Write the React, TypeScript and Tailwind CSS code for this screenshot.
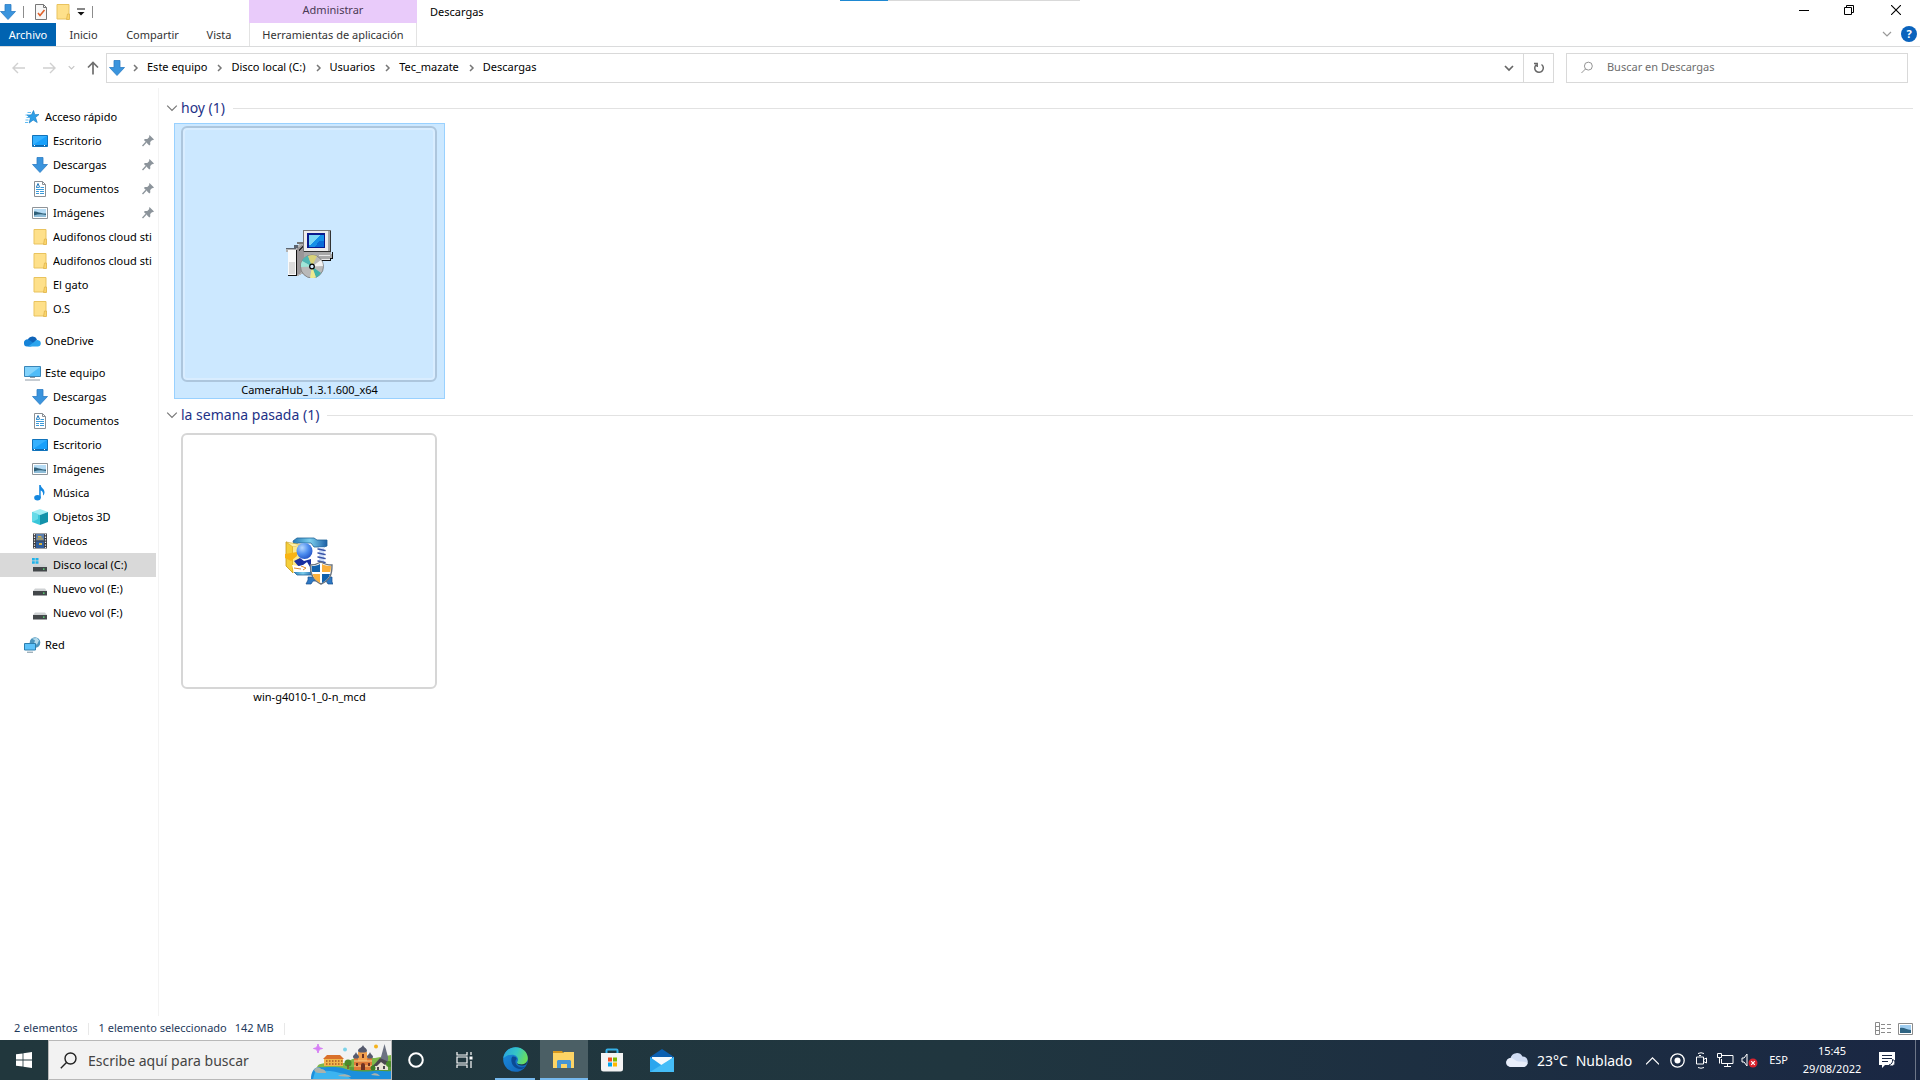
import { ReactNode } from 'react';

const Chevron = ({ d, size = 10, color = '#777', width = 1.2 }: { d: string; size?: number; color?: string; width?: number }) => (
  <svg width={size} height={size} viewBox="0 0 10 10" fill="none" stroke={color} strokeWidth={width}>
    <path d={d} />
  </svg>
);

const DOWN = 'M1 3l4 4 4-4';
const RIGHT = 'M3 2l3 3-3 3';

const ArrowDownIcon = () => (
  <svg width="16" height="16" viewBox="0 0 16 16">
    <path d="M5 .5h6v7h4.500L8 15.500.5 7.500H5z" fill="#3a94dd" stroke="#2b7cc4" strokeWidth=".8" />
  </svg>
);

const FolderIcon = () => (
  <svg width="16" height="16" viewBox="0 0 16 16">
    <path d="M2 .5h12V15H2z" fill="#fee08a" stroke="#e9c35e" />
    <path d="M12.500 10h2v5.500h-3z" fill="#fbd56b" stroke="#dfb44d" strokeWidth=".8" />
  </svg>
);

const DesktopIcon = () => (
  <svg width="16" height="16" viewBox="0 0 16 16">
    <path d="M.5 2.500h15v11H.5z" fill="#18a0fb" stroke="#1173bb" />
    <path d="M1 3h14L1 12z" fill="#35b1ff" />
    <path d="M1 12.500h14" stroke="#0f67ad" />
    <path d="M2 12.500h2M12 12.500h2" stroke="#fff" strokeDasharray="1 1" />
  </svg>
);

const DocumentIcon = () => (
  <svg width="16" height="16" viewBox="0 0 16 16" fill="none">
    <path d="M2.500.5h8l3 3v12h-11z" fill="#fff" stroke="#8a8f94" />
    <path d="M10.500.5v3h3" stroke="#8a8f94" />
    <path d="M4 8.500h8M4 10.500h3M8 10.500h4M4 12.500h3M8 12.500h4M8.500 6.500H12M4 6.500h3.500" stroke="#3b9ad9" />
    <path d="M4.500 6l1.500-3.500L7.500 6" stroke="#1f74b8" />
  </svg>
);

const PictureIcon = () => (
  <svg width="16" height="16" viewBox="0 0 16 16">
    <path d="M.5 2.500h15v11H.5z" fill="#fff" stroke="#8f9499" />
    <path d="M2 4h12v8H2z" fill="#b6dcf5" />
    <path d="M2 6.500c4 0 6 2 12 2V12H2z" fill="#2f5f78" />
    <path d="M2 10.500c4-1.500 8-1.500 12-.5v2H2z" fill="#8fbdd8" />
  </svg>
);

const StarIcon = () => (
  <svg width="16" height="16" viewBox="0 0 16 16">
    <path d="M9.500 1.500l1.300 4.200 4.200-.2-3.500 3 1.700 5-4-2.500-4 3 1.200-5L3 6.200l4.500-.4z" fill="#2d9fe8" stroke="#1b7fc5" strokeWidth=".7" />
    <path d="M3.500 3.500H7M1.500 6h3M2.500 8.500h2.500M1.500 11h3M1 13.500h3" stroke="#4db3f0" strokeWidth=".9" />
  </svg>
);

const OneDriveIcon = () => (
  <svg width="17" height="16" viewBox="0 0 17 16">
    <path d="M4 6a5 5 0 0 1 9 .5L8 12H4z" fill="#0f63b8" />
    <path d="M0 10.500a3.500 3.500 0 0 1 4.500-4L11 11l-4 2.500H3A3 3 0 0 1 0 10.500z" fill="#1583d8" />
    <path d="M4 13.500l6-4.500c2-2.500 4-2.500 5-1.500 1.500.5 1.800 2 1.800 3 0 2-1.300 3-3 3z" fill="#2ca5ee" />
  </svg>
);

const ComputerIcon = () => (
  <svg width="17" height="16" viewBox="0 0 17 16">
    <path d="M.5 1.500h16v10H.5z" fill="#4fbcf8" stroke="#3a86b8" />
    <path d="M1 2h15L4 11H1z" fill="#83d3fc" />
    <path d="M6 12.500h5M1 15h15" stroke="#8d9aa5" />
  </svg>
);

const MusicIcon = () => (
  <svg width="16" height="16" viewBox="0 0 16 16">
    <ellipse cx="5.500" cy="12.800" rx="3.300" ry="2.700" fill="#1488e0" />
    <path d="M7.200 0h1.500c.3 3 4 3.500 3.800 7.500-.1 1.500-.8 2.500-1.500 3 .5-3-.8-4.500-2.300-5V13H7.200z" fill="#1488e0" />
  </svg>
);

const CubeIcon = () => (
  <svg width="16" height="16" viewBox="0 0 16 16">
    <path d="M0 3l8-3 8 3-8 3z" fill="#a0eef5" />
    <path d="M0 3l8 3v10l-8-3z" fill="#38c6d9" />
    <path d="M16 3L8 6v10l8-3z" fill="#1392aa" />
    <path d="M0 3l6 2v5l-6 3z" fill="#66dbe8" />
  </svg>
);

const VideoIcon = () => (
  <svg width="16" height="16" viewBox="0 0 16 16">
    <path d="M1 .5h14v15H1z" fill="#3b3d42" />
    <path d="M4 1h8v6.500H4z" fill="#5b7fae" />
    <path d="M4 8.500h8V15H4z" fill="#2f5e9e" />
    <path d="M6 3h3l1 1.500H6zM5 5.500h6v1H5zM7 10h3v2H7z" fill="#d7b03c" />
    <path d="M2.500 1v14M13.500 1v14" stroke="#f0f0f0" strokeWidth="1.200" strokeDasharray="1.300 1.300" />
  </svg>
);

const DriveIcon = ({ system = false }: { system?: boolean }) => (
  <svg width="16" height="16" viewBox="0 0 16 16">
    <path d="M3 7.500h10l2 2.500H1z" fill="#cfd2d4" />
    <path d="M1 10h14v4.500H1z" fill="#43474a" />
    <path d="M11 12.200h1.500" stroke="#5cf07a" strokeWidth="1.300" />
    {system && <path d="M0 1h2.800v2.500H0zM3.500 1h3v2.500h-3zM0 4.200h2.800v2.500H0zM3.500 4.200h3v2.500h-3z" fill="#1fb3ea" />}
  </svg>
);

const NetworkIcon = () => (
  <svg width="17" height="16" viewBox="0 0 17 16">
    <circle cx="11" cy="5.500" r="5.300" fill="#4c95bd" />
    <path d="M8 1.500l3 2-1 3 3 1 2-4-2-2.500z" fill="#b5dbec" />
    <path d="M.5 6.500h11v6.500H.5z" fill="#5cc2fa" stroke="#2d7fae" />
    <path d="M3 15.200h6" stroke="#77909e" />
  </svg>
);

const PinIcon = () => (
  <svg width="12" height="12" viewBox="0 0 12 12" fill="#8c949b">
    <path d="M7.500 0L12 4.500l-1.200.7-.6-.2-2 2 .1 2.400-1 1L1.900 5l1-1 2.400.1 2-2-.2-.8z" />
    <path d="M4 7.200L.5 11" stroke="#8c949b" strokeWidth="1.300" />
  </svg>
);

type Item = { label: string; icon: ReactNode; pinned?: boolean; active?: boolean };
type Section = { label: string; icon: ReactNode; items: Item[] };

const sections: Section[] = [
  {
    label: 'Acceso rápido',
    icon: <StarIcon />,
    items: [
      { label: 'Escritorio', icon: <DesktopIcon />, pinned: true },
      { label: 'Descargas', icon: <ArrowDownIcon />, pinned: true },
      { label: 'Documentos', icon: <DocumentIcon />, pinned: true },
      { label: 'Imágenes', icon: <PictureIcon />, pinned: true },
      { label: 'Audifonos cloud sti', icon: <FolderIcon /> },
      { label: 'Audifonos cloud sti', icon: <FolderIcon /> },
      { label: 'El gato', icon: <FolderIcon /> },
      { label: 'O.S', icon: <FolderIcon /> },
    ],
  },
  { label: 'OneDrive', icon: <OneDriveIcon />, items: [] },
  {
    label: 'Este equipo',
    icon: <ComputerIcon />,
    items: [
      { label: 'Descargas', icon: <ArrowDownIcon /> },
      { label: 'Documentos', icon: <DocumentIcon /> },
      { label: 'Escritorio', icon: <DesktopIcon /> },
      { label: 'Imágenes', icon: <PictureIcon /> },
      { label: 'Música', icon: <MusicIcon /> },
      { label: 'Objetos 3D', icon: <CubeIcon /> },
      { label: 'Vídeos', icon: <VideoIcon /> },
      { label: 'Disco local (C:)', icon: <DriveIcon system />, active: true },
      { label: 'Nuevo vol (E:)', icon: <DriveIcon /> },
      { label: 'Nuevo vol (F:)', icon: <DriveIcon /> },
    ],
  },
  { label: 'Red', icon: <NetworkIcon />, items: [] },
];

const crumbs = ['Este equipo', 'Disco local (C:)', 'Usuarios', 'Tec_mazate', 'Descargas'];

const InstallerIcon = () => (
  <svg width="48" height="48" viewBox="0 0 48 48" shapeRendering="crispEdges">
    <path d="M1 18h11l3-5h5v30l-7 3H3V22H1z" fill="#b4b4b4" />
    <path d="M1 18h10v1H1zM9 15h4v3H9z" fill="#5c6470" />
    <path d="M12 12h7v2h-7z" fill="#777" />
    <path d="M3 20h8v25H3z" fill="#fafafa" />
    <path d="M4 32h6v12H4z" fill="#dcdcdc" />
    <path d="M11 20h1v26H3v-1h8z" fill="#111" />
    <path d="M12 18l7-4v27l-7 4z" fill="#9a9698" />
    <path d="M14 19l4-3v2l-4 3z" fill="#333" />
    <path d="M18 0h28v22H18z" fill="#777" />
    <path d="M19 1h24v20H19z" fill="#ededed" />
    <path d="M43 1h2v20h-2z" fill="#a5a5a5" />
    <path d="M45 1h1v21H19v-1h26z" fill="#333" />
    <path d="M22 3h18v15H22z" fill="#0a1a8c" />
    <path d="M24 5h15v12H24z" fill="#1590e8" />
    <path d="M24 5h11L26 15h-2z" fill="#7bd8f5" />
    <path d="M34 11h5v6h-9z" fill="#0a6cd8" />
    <path d="M19 22h27v2h2v5h-2v2H33l-14-4z" fill="#a8a8a8" />
    <path d="M34 25h11v1H34zM33 29h12v1H33z" fill="#e8e8e8" />
    <path d="M47 22h1v7h-2v2H36v-1h9v-2h2z" fill="#111" />
    <g shapeRendering="auto">
      <circle cx="27" cy="36.500" r="11.500" fill="#b9b9b9" stroke="#777" strokeWidth=".8" />
      <path d="M27 36.500L17 31q2-4 6-5.500z" fill="#4fb7b4" />
      <path d="M27 36.500L23 26q4-2 9 0z" fill="#d8d27a" />
      <path d="M27 36.500L36 30q2 3 2 6z" fill="#f1f1f1" />
      <path d="M27 36.500L36 43q-2 3-5 4.500z" fill="#3fb2a8" />
      <path d="M27 36.500L31 47.500q-3 1-6 .3z" fill="#ece98e" />
      <path d="M27 36.500L17 31q-1.500 3-1 6z" fill="#9fe6d8" />
      <circle cx="27" cy="36.500" r="2.300" fill="#d8ecff" stroke="#000" strokeWidth="1.200" />
    </g>
  </svg>
);

const WinZipIcon = () => (
  <svg width="48" height="48" viewBox="0 0 48 48">
    <defs>
      <linearGradient id="clamp" x1="0" x2="1" y1="0" y2="0">
        <stop offset="0" stopColor="#2378b5" />
        <stop offset=".5" stopColor="#7ed0ee" />
        <stop offset="1" stopColor="#1b5fa6" />
      </linearGradient>
      <radialGradient id="ball" cx=".35" cy=".3" r=".8">
        <stop offset="0" stopColor="#b5d8ff" />
        <stop offset=".5" stopColor="#4f8ff0" />
        <stop offset="1" stopColor="#1d4bc0" />
      </radialGradient>
    </defs>
    <path d="M8 4l4-3h17l3 2h10v6l-3 1h-6l-4 0-3-4H13L9 8z" fill="url(#clamp)" stroke="#1f6297" strokeWidth=".8" />
    <path d="M8 34h20v4H12z" fill="url(#clamp)" stroke="#1f6297" strokeWidth=".8" />
    <path d="M34 10h5v18h-5z" fill="#cfdff8" />
    <path d="M33 12l7 1.500M33 16l7 1.500M33 20l7 1.500M33 24l7 1.500" stroke="#3a55a8" strokeWidth="1.500" strokeLinecap="round" />
    <path d="M1 5l7 3v28l-7-7z" fill="#f5cf3b" stroke="#c79718" strokeWidth=".8" />
    <path d="M1 5l17 3-10 2z" fill="#fdf0a8" stroke="#d0a626" strokeWidth=".6" />
    <path d="M8 10l7-1v20l-7 7z" fill="#fbe98e" />
    <path d="M0 17l12-2v4l-6 5-6-3z" fill="#f8b414" />
    <path d="M9 24l6-3 4 3 7-2v9l-4 2-4-5-4 2z" fill="#1a2fa0" />
    <path d="M7 28l7 1 4-1 4-3 3 5v5H9z" fill="#fff" />
    <path d="M9 31l7 1M16 29l5 2-3 2" stroke="#e08b2e" fill="none" />
    <circle cx="19.500" cy="14" r="8" fill="url(#ball)" />
    <path d="M23 40h24v5l1 2h-5l-2-3H28l-2 3h-5l2-4z" fill="#2d78c4" stroke="#174e8c" strokeWidth=".7" />
    <path d="M36 25c3 2 6 3 11 3 0 10-2 15-11 19-8-4-10.500-9-10.500-19 4 0 7-1 10.500-3z" fill="#fff" stroke="#6b737c" strokeWidth="1.400" />
    <path d="M35 27v8h-7.800c-.4-2-.6-4-.6-6 3.400 0 6-.6 8.400-2zM37 37h8c-1 4-3.500 6.500-8 9z" fill="#1161ac" />
    <path d="M37 27c2.500 1.400 5.500 2 9 2 0 2-.2 4-.7 6H37zM35 37h-7.300c1 4 3 6.500 7.300 9z" fill="#fbb13c" />
  </svg>
);

const groups = [
  { title: 'hoy (1)', file: 'CameraHub_1.3.1.600_x64', icon: <InstallerIcon />, selected: true },
  { title: 'la semana pasada (1)', file: 'win-g4010-1_0-n_mcd', icon: <WinZipIcon />, selected: false },
];

function TitleBar() {
  return (
    <header className="relative">
      <div className="absolute left-[840px] top-0 flex h-px w-60 bg-[#d9d9d9]">
        <span className="w-12 bg-[#1e88d2]" />
      </div>
      <div className="flex h-[46px] items-start">
        <div className="w-[249px]">
          <div className="flex h-[23px] items-center">
            <ArrowDownIcon />
            <span className="ml-[7px] h-3 w-px bg-[#8c8c8c]" />
            <button aria-label="Propiedades" className="ml-[9px]">
              <svg width="16" height="16" viewBox="0 0 16 16" fill="none">
                <path d="M2.500.5h8l3 3v12h-11z" fill="#f7f7f7" stroke="#777" />
                <path d="M10.500.5v3h3" stroke="#777" />
                <path d="M5 9l2 2.500L11.500 6" stroke="#e0612a" strokeWidth="1.600" />
              </svg>
            </button>
            <button aria-label="Nueva carpeta" className="ml-1.5"><FolderIcon /></button>
            <button aria-label="Personalizar" className="ml-1.5">
              <svg width="8" height="8" viewBox="0 0 8 8"><path d="M0 .5h8v1H0zM.5 4h7L4 7.500z" fill="#111" /></svg>
            </button>
            <span className="ml-[7px] h-3 w-px bg-[#8c8c8c]" />
          </div>
          <nav className="flex h-[23px] items-center text-[#333]">
            <button className="h-full w-14 bg-[#0063b1] pt-px text-white">Archivo</button>
            <button className="w-[55px] pt-px">Inicio</button>
            <button className="w-[83px] pt-px">Compartir</button>
            <button className="w-[50px] pt-px">Vista</button>
          </nav>
        </div>
        <div className="h-full w-[168px]">
          <div className="flex h-[23px] items-center justify-center bg-[#e9cbfa] pb-[2px] text-[#4b3a55]">Administrar</div>
          <button className="h-[23px] w-full border-x border-[#e3e3e3] pt-px text-[#333]">Herramientas de aplicación</button>
        </div>
        <h1 className="ml-[13px] flex h-6 items-center">Descargas</h1>
        <div className="ml-auto">
          <div className="flex h-[20px] items-center">
            <button aria-label="Minimizar" className="flex w-[45px] justify-center">
              <svg width="10" height="10" viewBox="0 0 10 10" stroke="#000"><path d="M0 5.500h10" /></svg>
            </button>
            <button aria-label="Restaurar" className="flex w-[45px] justify-center">
              <svg width="10" height="10" viewBox="0 0 10 10" fill="none" stroke="#000"><path d="M.5 2.500h7v7h-7zM2.500 2.500v-2h7v7h-2" /></svg>
            </button>
            <button aria-label="Cerrar" className="flex w-[49px] justify-center">
              <svg width="10" height="10" viewBox="0 0 10 10" stroke="#000" strokeWidth="1.100"><path d="M0 0l10 10M10 0L0 10" /></svg>
            </button>
          </div>
          <div className="flex h-[26px] items-center justify-end gap-[9px] pr-[3px] pt-[2px]">
            <button aria-label="Expandir la cinta"><Chevron d={DOWN} color="#999" /></button>
            <button aria-label="Ayuda" className="size-4 rounded-full bg-[#0a63bd] text-[11px] leading-4 font-bold text-white">?</button>
          </div>
        </div>
      </div>
    </header>
  );
}

function AddressBar() {
  return (
    <div className="flex h-[42px] items-center border-t border-[#dadbdc] pr-3">
      <div className="flex w-[106px] items-center pl-3">
        <button aria-label="Atrás">
          <svg width="14" height="12" viewBox="0 0 14 12" fill="none" stroke="#d0d0d0" strokeWidth="1.400"><path d="M13 6H1.500M6 1L1 6l5 5" /></svg>
        </button>
        <button aria-label="Adelante" className="ml-4">
          <svg width="14" height="12" viewBox="0 0 14 12" fill="none" stroke="#d0d0d0" strokeWidth="1.400"><path d="M1 6h11.500M8 1l5 5-5 5" /></svg>
        </button>
        <button aria-label="Recientes" className="ml-3"><Chevron d={DOWN} size={7} color="#c4c4c4" width={1.6} /></button>
        <button aria-label="Subir" className="ml-3">
          <svg width="12" height="14" viewBox="0 0 12 14" fill="none" stroke="#6e6e6e" strokeWidth="1.700"><path d="M6 13.500V1.500M1 6.500l5-5 5 5" /></svg>
        </button>
      </div>
      <div className="flex h-[30px] flex-1 items-center border border-[#d9d9d9] pl-[2px]">
        <ArrowDownIcon />
        <div className="flex items-center gap-[2px]">
          {crumbs.map((crumb) => (
            <div key={crumb} className="flex items-center">
              <span className="flex w-[22px] justify-center"><Chevron d={RIGHT} width={1.5} /></span>
              <a href="#" className="whitespace-nowrap">{crumb}</a>
            </div>
          ))}
        </div>
        <button aria-label="Ubicaciones anteriores" className="mr-[9px] ml-auto"><Chevron d={DOWN} color="#666" width={1.7} /></button>
        <button aria-label="Actualizar" className="flex h-full w-[30px] items-center justify-center border-l border-[#d9d9d9]">
          <svg width="12" height="12" viewBox="0 0 12 12" fill="none" stroke="#666" strokeWidth="1.500"><path d="M8.500 2.500A4.300 4.300 0 1 1 3.200 2.800M1 1.500h3.200V5" /></svg>
        </button>
      </div>
      <label className="ml-3 flex h-[30px] w-[342px] items-center border border-[#d9d9d9] pl-[14px]">
        <svg width="13" height="13" viewBox="0 0 13 13" fill="none" stroke="#8a8a8a"><circle cx="8" cy="5" r="4.300" /><path d="M5 8L.5 12.500" /></svg>
        <input type="search" aria-label="Buscar en Descargas" placeholder="Buscar en Descargas" className="ml-[14px] w-full outline-none placeholder:text-[#6d6d6d]" />
      </label>
    </div>
  );
}

function Sidebar() {
  return (
    <nav className="flex w-[159px] shrink-0 flex-col gap-2 border-r border-[#f3f3f3] pt-[17px] pr-[2px]">
      {sections.map((section) => (
        <div key={section.label}>
          <a href="#" className="flex h-6 items-center gap-[5px] pl-6">
            <span className="w-4">{section.icon}</span>
            {section.label}
          </a>
          {section.items.map((item, i) => (
            <a key={i} href="#" className={`flex h-6 items-center pl-8 ${item.active ? 'bg-[#d9d9d9]' : ''}`}>
              {item.icon}
              <span className="ml-[5px] flex-1 overflow-hidden whitespace-nowrap">{item.label}</span>
              {item.pinned && <span className="pr-[2px]"><PinIcon /></span>}
            </a>
          ))}
        </div>
      ))}
    </nav>
  );
}

function FileList() {
  return (
    <main className="flex-1 px-[7px] pt-[7px]">
      {groups.map((group) => (
        <section key={group.title} className="mb-[3px]">
          <h2 className="flex h-7 items-center pb-[2px] text-sm text-[#1e3287]">
            <Chevron d={DOWN} size={12} width={1} />
            <span className="ml-[3px]">{group.title}</span>
            <span className="ml-2 h-px flex-1 bg-[#e2e2e2]" />
          </h2>
          <button className={`ml-2 block h-[276px] w-[271px] border px-[6px] pt-px ${group.selected ? 'border-[#99d1ff] bg-[#cce8ff]' : 'border-transparent'}`}>
            <span className={`flex h-64 w-64 items-center justify-center rounded-md border-2 ${group.selected ? 'border-[#adc6dd] shadow-[inset_0_0_0_2px_#d9edff]' : 'border-[#d6d6d6]'}`}>
              {group.icon}
            </span>
            <span className="block leading-4">{group.file}</span>
          </button>
        </section>
      ))}
    </main>
  );
}

function StatusBar() {
  return (
    <footer className="flex h-6 items-center pt-px pr-[7px] pl-[14px] text-[#1e395b]">
      <span>2 elementos</span>
      <span className="mx-[10px] h-3 w-px bg-[#e8e8e8]" />
      <span>1 elemento seleccionado</span>
      <span className="ml-2">142 MB</span>
      <span className="ml-[10px] h-3 w-px bg-[#e8e8e8]" />
      <button aria-label="Detalles" className="ml-auto">
        <svg width="17" height="13" viewBox="0 0 17 13" fill="none" stroke="#8a8a8a">
          <path d="M.5.5h4v12h-4zM.5 4.500h4M.5 8.500h4" />
          <path d="M6 2.500h11M6 6.500h11M6 10.500h11" strokeDasharray="4 2" />
        </svg>
      </button>
      <button aria-label="Miniaturas" className="ml-[6px]">
        <svg width="15" height="12" viewBox="0 0 15 12">
          <path d="M.5.5h14v11H.5z" fill="#fff" stroke="#8c8c8c" />
          <path d="M2 2h11v8H2z" fill="#9fcdf0" />
          <path d="M2 5c4-1 6 1.500 11 2v3H2z" fill="#2f6482" />
        </svg>
      </button>
    </footer>
  );
}

const Cityscape = () => (
  <svg width="80" height="38" viewBox="0 0 80 38">
    <path d="M6 26c2-4 5-3 8-4h22c3-4 8-5 12-5h16l16-3v20H6z" fill="#7fb84a" />
    <path d="M38 26c14 1 28-3 42-6v14H40z" fill="#5c9c3a" />
    <path d="M0 38c0-7 3-12 8-12 8 1 14-1 24 1 10 4 20 4 30 3 6-1 12 1 18 0v8z" fill="#1b8fdc" />
    <path d="M4 31c12-3 20 0 30 2l6 5H2z" fill="#3cb4f0" />
    <path d="M13 18l3-2h13l3 2v7H13z" fill="#f0b64c" />
    <path d="M12 18l4-4h13l4 4z" fill="#d9702a" />
    <path d="M15 20h17M15 23h17" stroke="#a85a24" strokeWidth="1.500" strokeDasharray="1.500 1.500" />
    <path d="M43 17h18v12H43z" fill="#e07a38" />
    <path d="M47 11h9v9h-9z" fill="#f2a14e" />
    <path d="M43 20h18M43 25h18" stroke="#f6cf8a" strokeWidth="1.200" />
    <path d="M50 29v-5a2 2 0 0 1 4 0v5zM45 22h2v3h-2zM57 22h2v3h-2zM51 13h2v4h-2z" fill="#6e3224" />
    <path d="M47 10c0-3 4-3 5-6 1 3 4 3 4 6 0 2-9 2-9 0zM42 16c0-2 2-2 3-5 1 3 3 3 3 5 0 2-6 2-6 0zM56 16c0-2 2-2 3-5 1 3 3 3 3 5 0 2-6 2-6 0z" fill="#565a6e" />
    <path d="M70 16l3.500-13L77 16v8h-7z" fill="#6c7282" />
    <path d="M64 24l5-6 8 3v8H64z" fill="#e9e3d6" />
    <path d="M62 25l7-8 9 4-4 3-4-3-4 4z" fill="#4c4750" />
    <path d="M66 26h2v3h-2zM72 25h2v3h-2z" fill="#4c4750" />
    <circle cx="37" cy="22" r="3.500" fill="#4b8a2c" /><path d="M37 24v4" stroke="#7a5428" strokeWidth="1.500" />
    <circle cx="62" cy="27" r="2.500" fill="#3d7d28" /><circle cx="78" cy="23" r="3" fill="#4b8a2c" />
    <path d="M3 29c2-4 6-3 7-1 3 0 5 2 5 4H8c-3 0-4-1-5-3zM27 35c2-2 11-3 13 1zM60 34c3-3 7-2 9 1z" fill="#a9b2ac" />
    <path d="M7 3c.6 3 1.500 4 4.500 4.500C8.500 8 7.600 9 7 12c-.6-3-1.500-4-4.500-4.500C5.500 7 6.400 6 7 3z" fill="#d67ef5" stroke="#d67ef5" />
    <circle cx="34" cy="8.500" r="2" fill="#7cd3ea" />
    <circle cx="65" cy="5.500" r="2" fill="#f5b21c" />
  </svg>
);

const apps = [
  {
    name: 'Microsoft Edge',
    style: 'ml-[7px] w-10 border-b-2 border-[#76b9ed] mr-[5px]',
    icon: (
      <svg width="25" height="25" viewBox="0 0 25 25">
        <defs>
          <linearGradient id="edgeTop" x1="0" x2="1" y1=".3" y2=".6">
            <stop offset="0" stopColor="#2aa5dd" />
            <stop offset=".5" stopColor="#35c6c6" />
            <stop offset="1" stopColor="#6ee053" />
          </linearGradient>
          <linearGradient id="edgeBottom" x1="0" x2="1" y1="0" y2="1">
            <stop offset="0" stopColor="#1b8fe0" />
            <stop offset="1" stopColor="#1160b4" />
          </linearGradient>
        </defs>
        <circle cx="12.500" cy="12.500" r="12.300" fill="url(#edgeBottom)" />
        <path d="M.4 11.500C1 4.800 6 .2 12.500.2c7 0 12.300 5 12.300 10.800 0 4-3 6.500-6.300 6.500-2.500 0-4.500-1-4.500-2 0-.7 1-1.200 1-3 0-2.500-2.500-4.800-6-4.800-4 0-7 1.800-8.600 3.800z" fill="url(#edgeTop)" />
        <path d="M9 10c-2 4 .5 11 7 12 3 .4 5-.7 6.800-2.500-3 1.500-9.300 1-10.300-4-.3-1.800.5-3 1.300-3.500C13 9.500 10 9 9 10z" fill="#0b4a94" />
        <path d="M14 15.500c0 1 2 2 4.500 2 2.300 0 4.300-1 5.500-3l-.6 2.500c-3 2.500-9.400 2-9.400-1.500z" fill="#21373d" />
      </svg>
    ),
  },
  {
    name: 'Explorador de archivos',
    style: 'w-12 border-b-2 border-[#76b9ed] bg-[#4b5f65]',
    icon: (
      <svg width="22" height="19" viewBox="0 0 22 19">
        <path d="M0 1h9l2 3H0z" fill="#d9981c" />
        <path d="M0 3h10l1-1h10v16H0z" fill="#fdd465" />
        <path d="M4 18v-7l1-1h12l1 1v7h-4v-4H8v4z" fill="#4795d4" />
      </svg>
    ),
  },
  {
    name: 'Microsoft Store',
    style: 'w-12',
    icon: (
      <svg width="24" height="24" viewBox="0 0 24 24">
        <path d="M6.500 6V2.500a1 1 0 0 1 1-1h9a1 1 0 0 1 1 1V6" fill="none" stroke="#36b1e8" strokeWidth="2" />
        <path d="M1 5h22v16a2.500 2.500 0 0 1-2.500 2.500h-17A2.500 2.500 0 0 1 1 21z" fill="#f4f4f4" />
        <path d="M8 9.500h4v4H8z" fill="#f25022" /><path d="M13 9.500h4v4h-4z" fill="#7fba00" />
        <path d="M8 14.500h4v4H8z" fill="#00a4ef" /><path d="M13 14.500h4v4h-4z" fill="#ffb900" />
      </svg>
    ),
  },
  {
    name: 'Correo',
    style: 'w-[52px]',
    icon: (
      <svg width="24" height="23" viewBox="0 0 24 23">
        <path d="M0 8l12-8 12 8v4H0z" fill="#0b5fb0" />
        <path d="M2 8h20v8H2z" fill="#f6fafd" />
        <path d="M0 8l12 8.500L24 8v15H0z" fill="#2aa6ee" />
        <path d="M24 8v15H0z" fill="#45bdf7" />
      </svg>
    ),
  },
];

function Taskbar() {
  return (
    <footer className="flex h-10 items-center bg-linear-to-r from-[#21373d] via-[#20363f] to-[#1a2743] text-white">
      <button aria-label="Inicio" className="flex w-12 justify-center">
        <svg width="16" height="16" viewBox="0 0 16 16" fill="#fff"><path d="M0 2.300L6.600 1.400v6.200H0zM7.400 1.300L16 0v7.600H7.400zM0 8.400h6.600v6.200L0 13.700zM7.400 8.400H16V16l-8.600-1.300z" /></svg>
      </button>
      <label className="flex h-10 w-[344px] items-center border border-[#b8b8b8] bg-[#f2f2f2] pl-[11px]">
        <svg width="17" height="17" viewBox="0 0 17 17" fill="none" stroke="#222" strokeWidth="1.400"><circle cx="10.500" cy="6.500" r="5.500" /><path d="M6.500 10.500L.8 16.200" /></svg>
        <input type="search" aria-label="Escribe aquí para buscar" placeholder="Escribe aquí para buscar" className="ml-[11px] min-w-0 flex-1 pt-[2px] text-sm outline-none placeholder:text-[#444]" />
        <Cityscape />
      </label>
      <button aria-label="Cortana" className="flex w-12 justify-center">
        <svg width="16" height="16" viewBox="0 0 16 16" fill="none" stroke="#fff" strokeWidth="2"><circle cx="8" cy="8" r="6.800" /></svg>
      </button>
      <button aria-label="Vista de tareas" className="flex w-12 justify-center">
        <svg width="17" height="16" viewBox="0 0 17 16" fill="none" stroke="#fff" strokeWidth="1.200">
          <path d="M1 0v3h10V0M1 16v-3h10v3M1 5h10v6H1zM15 0v3M15 9v7" />
          <path d="M13.500 4.500h3v3h-3z" fill="#fff" stroke="none" />
        </svg>
      </button>
      {apps.map((app) => (
        <button key={app.name} aria-label={app.name} className={`flex h-full items-center justify-center ${app.style}`}>{app.icon}</button>
      ))}
      <div className="ml-auto flex h-full items-center">
        <button className="flex items-center text-sm whitespace-nowrap">
          <svg width="23" height="16" viewBox="0 0 23 16">
            <path d="M5 15a4.500 4.500 0 0 1-.5-9A6.500 6.500 0 0 1 16.500 4.500 5.300 5.300 0 0 1 17.500 15z" fill="#cfdcf3" />
            <path d="M5 15a4.500 4.500 0 0 1-.5-9c3 0 4 2 6 3 3 1 9 0 11 2 0 2-2 4-4 4z" fill="#e8eefa" />
          </svg>
          <span className="ml-2 pt-px">23°C</span>
          <span className="ml-2 pt-px">Nublado</span>
        </button>
        <button aria-label="Iconos ocultos" className="ml-[14px]"><Chevron d="M0 8l5-5 5 5" size={13} color="#fff" width={1} /></button>
        <svg className="ml-[11px]" width="15" height="15" viewBox="0 0 15 15" fill="none" stroke="#fff" strokeWidth="1.300"><circle cx="7.500" cy="7.500" r="6.700" /><circle cx="7.500" cy="7.500" r="3" fill="#fff" stroke="none" /></svg>
        <svg className="ml-[10px]" width="13" height="17" viewBox="0 0 13 17" fill="none" stroke="#fff">
          <path d="M3 1.500q3-1.500 6 0M3 15.500q3 1.500 6 0M1.500 5h7v7h-7zM8.500 7.500l3-1.500v5l-3-1.500M4 3.500h2" />
        </svg>
        <svg className="ml-[9px]" width="17" height="15" viewBox="0 0 17 15" fill="none" stroke="#fff">
          <path d="M5 2.500h11v8H4.500V6M10.500 10.500v3M7 13.500h7M.5.500h4v4h-4zM2.500 4.500v6" />
        </svg>
        <svg className="ml-[7px]" width="17" height="16" viewBox="0 0 17 16" fill="none">
          <path d="M1 6h2l3-4v12l-3-4H1z" stroke="#fff" />
          <circle cx="12" cy="11" r="4.500" fill="#d9232e" />
          <path d="M10.200 9.200l3.600 3.600M13.800 9.200l-3.600 3.600" stroke="#fff" strokeWidth="1.200" />
        </svg>
        <button className="ml-[11px]">ESP</button>
        <button className="ml-[14px] w-[60px] text-center leading-[18px]">
          15:45<br />29/08/2022
        </button>
        <button aria-label="Notificaciones" className="ml-[17px]">
          <svg width="17" height="17" viewBox="0 0 17 17">
            <path d="M0 0h16v13H6l-3 3v-3H0z" fill="#fff" />
            <path d="M3 3.500h10M3 6.500h10M3 9.500h6" stroke="#1a2743" />
            <path d="M10 13a3.500 3.500 0 0 0 6-2 3 3 0 0 0-2.500-3.500 4.500 4.500 0 0 1-3.500 5.500z" fill="#fff" stroke="#1a2743" />
          </svg>
        </button>
        <span className="ml-[19px] mr-1 h-full w-px bg-[#6d7688]" />
      </div>
    </footer>
  );
}

export default function App() {
  return (
    <div className="flex min-h-screen flex-col bg-white font-['Noto_Sans','Open_Sans',sans-serif] text-[11px] text-black">
      <TitleBar />
      <AddressBar />
      <div className="flex flex-1">
        <Sidebar />
        <FileList />
      </div>
      <StatusBar />
      <Taskbar />
    </div>
  );
}
